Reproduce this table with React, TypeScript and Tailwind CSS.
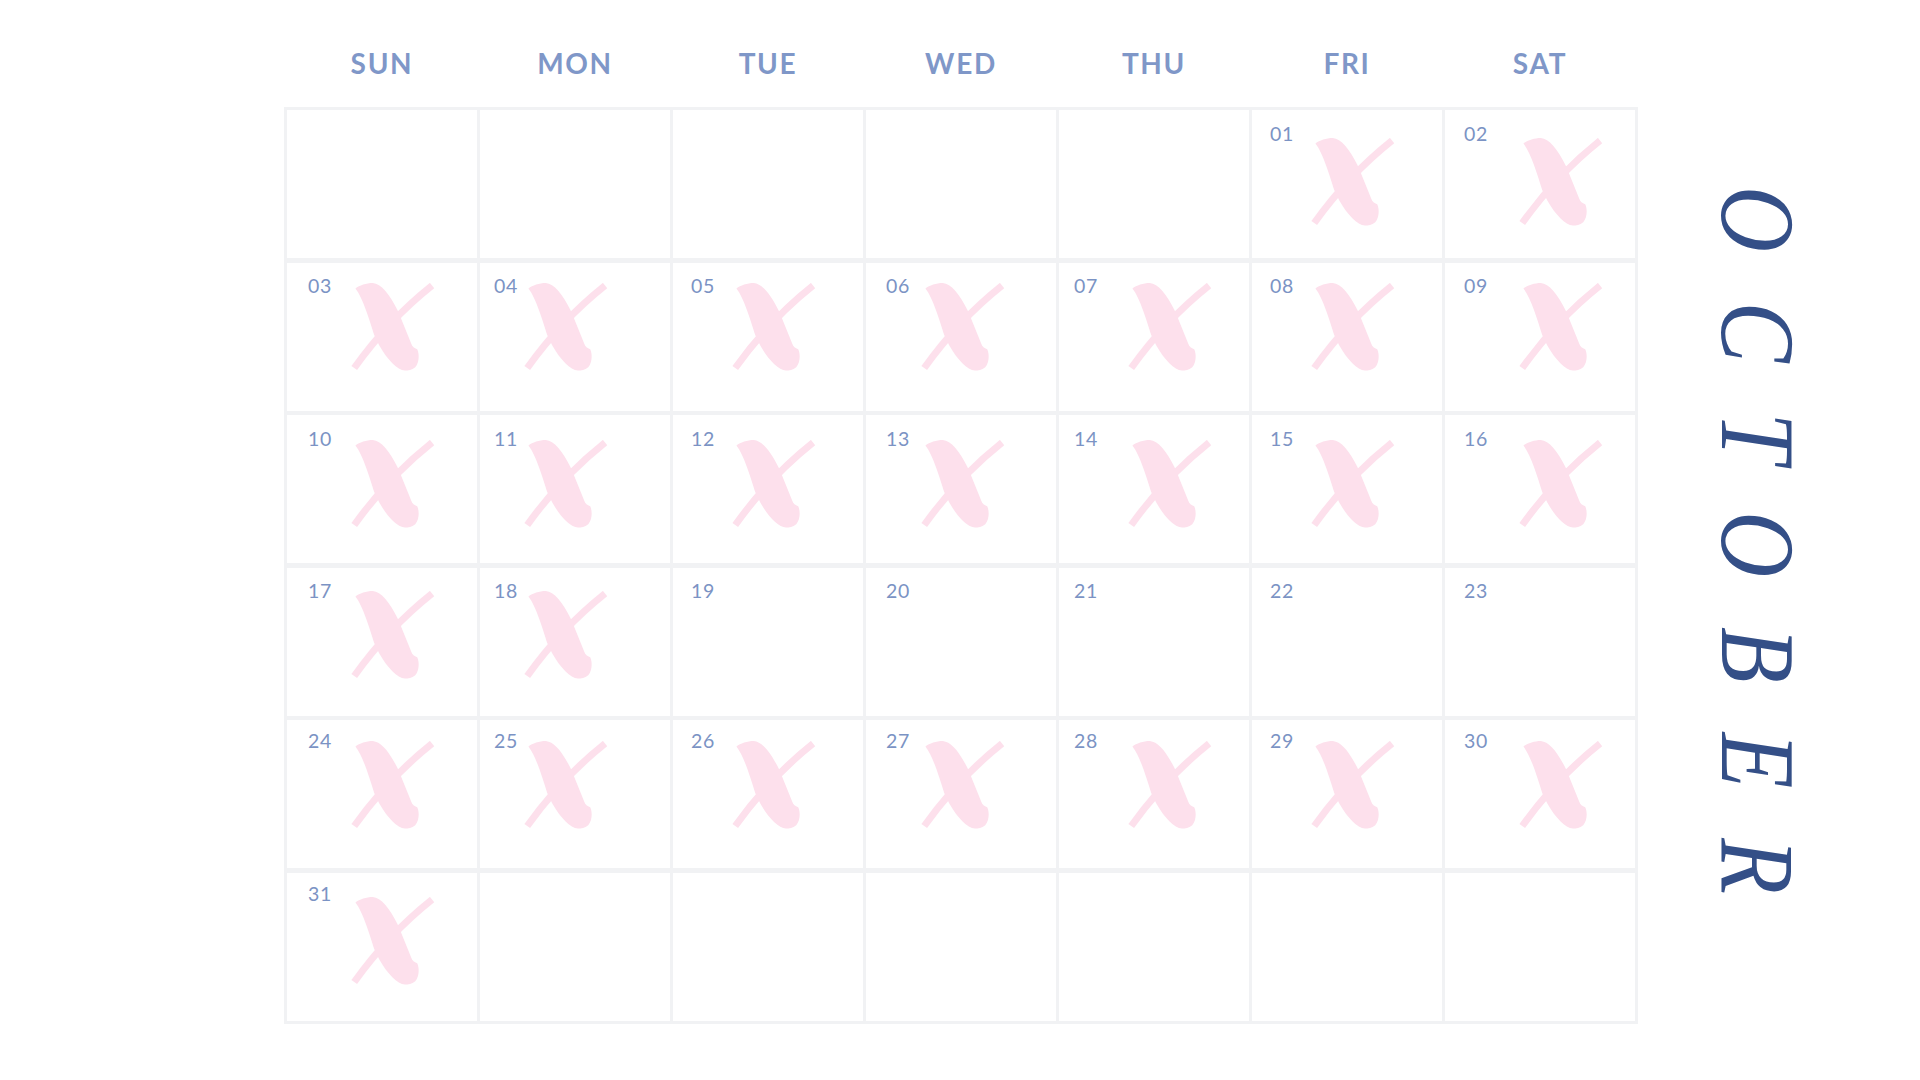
const DAYS = ['SUN', 'MON', 'TUE', 'WED', 'THU', 'FRI', 'SAT'];

const FIRST_WEEKDAY = 5;
const DAY_COUNT = 31;
const UNMARKED = [19, 20, 21, 22, 23];

// hand-placed offsets, they drift a little per column / row in the original
const NUM_PL = ['pl-[21px]', 'pl-[14px]', 'pl-[18px]', 'pl-[20px]', 'pl-[15px]', 'pl-[18px]', 'pl-[19px]'];
const NUM_PT = ['pt-[13px]', 'pt-[12px]', 'pt-[13px]', 'pt-[12px]', 'pt-[10px]', 'pt-[10px]'];
const MARK_LEFT = ['left-[63px]', 'left-[43px]', 'left-[58px]', 'left-[54px]', 'left-[68px]', 'left-[58px]', 'left-[73px]'];
const MARK_TOP = ['top-[28px]', 'top-[20px]', 'top-[25px]', 'top-[23px]', 'top-[21px]', 'top-[24px]'];

function Mark({ className }: { className: string }) {
  return (
    <svg className={className} width="86" height="89" viewBox="0 0 86 90">
      <path d="M3.8 86 Q38 38 82.5 2.6" stroke="#fde0ec" strokeWidth="7" fill="none" />
      <path
        d="M5 5.5 C9 2.5 16 0 22.6 0 C31 1 39 10 48.5 29.3 L61.5 61.5 C62.5 64.5 64.5 66 67.5 67 C69.5 71 70 80 65.5 85.2 C62 88 58.5 88.6 55 88.6 C47.5 88 37.5 78 29 63 L24 52.6 C19.5 38 12.5 15 5 5.5 Z"
        fill="#fde0ec"
      />
    </svg>
  );
}

export default function App() {
  const cells = Array.from({ length: 42 }, (_, i) => {
    const day = i - FIRST_WEEKDAY + 1;
    return day >= 1 && day <= DAY_COUNT ? day : null;
  });

  return (
    <div className="w-[1920px] h-[1080px] bg-white flex overflow-hidden font-['Lato',sans-serif]">
      <div className="ml-[284px] pt-[49px] flex flex-col w-[1354px] shrink-0">
        <div className="grid grid-cols-[repeat(7,190px)] gap-x-[3px] px-[3px] mb-[30px]">
          {DAYS.map((d) => (
            <div key={d} className="text-center text-[28px] leading-none font-bold tracking-[0.06em] text-[#7f97c8]">
              {d}
            </div>
          ))}
        </div>

        <div className="grid grid-cols-[repeat(7,190px)] grid-rows-[repeat(6,148px)] gap-x-[3px] gap-y-[4.5px] p-[3px] bg-[#f1f2f4]">
          {cells.map((day, i) => {
            const col = i % 7;
            const row = Math.floor(i / 7);
            const marked = day !== null && !UNMARKED.includes(day);
            return (
              <div key={i} className={`relative bg-white ${NUM_PL[col]} ${NUM_PT[row]}`}>
                {day !== null && (
                  <span className="text-[19.5px] leading-none tracking-[0.03em] text-[#7b93c4]">
                    {day < 10 ? `0${day}` : day}
                  </span>
                )}
                {marked && <Mark className={`absolute ${MARK_LEFT[col]} ${MARK_TOP[row]}`} />}
              </div>
            );
          })}
        </div>
      </div>

      <div className="flex-1 flex pt-[186px] pl-[66px]">
        <span className="[writing-mode:vertical-rl] italic text-[106px] leading-none tracking-[58px] text-[#344f87] scale-y-86 origin-top font-['Liberation_Serif',serif] h-fit">
          OCTOBER
        </span>
      </div>
    </div>
  );
}
